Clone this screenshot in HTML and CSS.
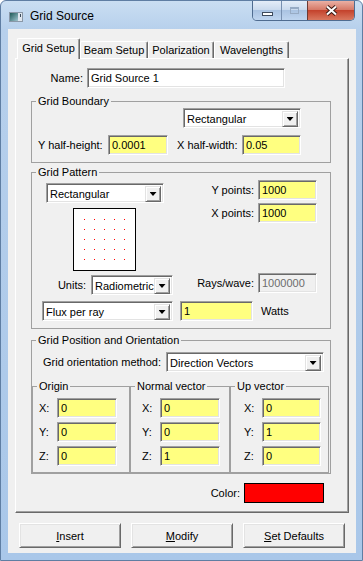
FILE: index.html
```html
<!DOCTYPE html>
<html lang="en">
<head>
<meta charset="UTF-8" />
<meta name="viewport" content="width=device-width, initial-scale=1" />
<title>Grid Source</title>
<link rel="stylesheet" href="styles.css">
</head>
<body>

<div class="window">
  <div class="titlebar">
    <svg class="app-icon" width="14" height="10" viewBox="0 0 14 10">
      <defs>
        <linearGradient id="iconFill" x1="0" y1="0" x2="1" y2="1">
          <stop offset="0" stop-color="#1f5a57" />
          <stop offset="1" stop-color="#9fc4cf" />
        </linearGradient>
      </defs>
      <rect x="0.5" y="0.5" width="13" height="9" fill="#dfe6ee" stroke="#8a98a8" />
      <rect x="1" y="1" width="8" height="8" fill="url(#iconFill)" />
      <rect x="11" y="2" width="1" height="3" fill="#3a4a5a" />
    </svg>
    <span class="title">Grid Source</span>
    <div class="caption-btns">
      <div class="cap cap-min"><span class="min-glyph"></span></div>
      <div class="cap cap-max"><span class="max-glyph"></span></div>
      <div class="cap cap-close">
        <svg width="13" height="11" viewBox="0 0 13 11">
          <path d="M2 1.5 L11 9.5 M11 1.5 L2 9.5" stroke="#3b1a14" stroke-width="4" />
          <path d="M2 1.5 L11 9.5 M11 1.5 L2 9.5" stroke="#fff" stroke-width="2" />
        </svg>
      </div>
    </div>
  </div>

  <div class="client">
    <div class="tabs">
      <div class="tab active">Grid Setup</div>
      <div class="tab">Beam Setup</div>
      <div class="tab">Polarization</div>
      <div class="tab">Wavelengths</div>
    </div>

    <div class="panel">
      <div class="name-row">
        <label class="name-label">Name:</label>
        <input class="field name-field" type="text" value="Grid Source 1" />
      </div>

      <!-- Grid Boundary -->
      <fieldset class="group boundary">
        <legend>Grid Boundary</legend>
        <div class="fs-body">
          <div class="combo boundary-shape">
            <span class="combo-text">Rectangular</span><span class="combo-btn"></span>
          </div>
          <div class="half-row">
            <label class="lbl-yhalf">Y half-height:</label>
            <input class="field yellow w60" type="text" value="0.0001" />
            <label class="lbl-xhalf">X half-width:</label>
            <input class="field yellow w59" type="text" value="0.05" />
          </div>
        </div>
      </fieldset>

      <!-- Grid Pattern -->
      <fieldset class="group pattern">
        <legend>Grid Pattern</legend>
        <div class="fs-body">
          <div class="pattern-top">
            <div class="pattern-left">
              <div class="combo pattern-shape">
                <span class="combo-text">Rectangular</span><span class="combo-btn"></span>
              </div>
              <svg class="preview" width="63" height="63" viewBox="0 0 63 63">
                <defs>
                  <pattern id="dots" x="11" y="11" width="10" height="10" patternUnits="userSpaceOnUse">
                    <rect width="1" height="1" fill="#ff0000" />
                  </pattern>
                </defs>
                <rect x="0.5" y="0.5" width="62" height="62" fill="#fff" stroke="#000" />
                <rect x="11" y="11" width="41" height="41" fill="url(#dots)" />
              </svg>
            </div>
            <div class="pattern-right">
              <div class="pair">
                <label class="lbl-points">Y points:</label>
                <input class="field yellow w59" type="text" value="1000" />
              </div>
              <div class="pair points-x">
                <label class="lbl-points">X points:</label>
                <input class="field yellow w59" type="text" value="1000" />
              </div>
            </div>
          </div>

          <div class="units-row">
            <div class="pair units-pair">
              <label class="lbl-units">Units:</label>
              <div class="combo units-combo">
                <span class="combo-text">Radiometric</span><span class="combo-btn"></span>
              </div>
            </div>
            <div class="pair">
              <label class="lbl-rays">Rays/wave:</label>
              <input class="field w59" type="text" value="1000000" disabled />
            </div>
          </div>

          <div class="flux-row">
            <div class="combo flux-combo">
              <span class="combo-text">Flux per ray</span><span class="combo-btn"></span>
            </div>
            <input class="field yellow flux-field" type="text" value="1" />
            <span class="watts">Watts</span>
          </div>
        </div>
      </fieldset>

      <!-- Grid Position and Orientation -->
      <fieldset class="group position">
        <legend>Grid Position and Orientation</legend>
        <div class="orient-row">
          <label class="lbl-orient">Grid orientation method:</label>
          <div class="combo orient-combo">
            <span class="combo-text">Direction Vectors</span><span class="combo-btn"></span>
          </div>
        </div>

        <div class="vectors">
          <fieldset class="group vec vec-origin">
            <legend>Origin</legend>
            <div class="vec-body">
              <div class="vec-row"><label>X:</label><input class="field yellow w60" type="text" value="0" /></div>
              <div class="vec-row"><label>Y:</label><input class="field yellow w60" type="text" value="0" /></div>
              <div class="vec-row"><label>Z:</label><input class="field yellow w60" type="text" value="0" /></div>
            </div>
          </fieldset>
          <fieldset class="group vec vec-normal">
            <legend>Normal vector</legend>
            <div class="vec-body">
              <div class="vec-row"><label>X:</label><input class="field yellow w60" type="text" value="0" /></div>
              <div class="vec-row"><label>Y:</label><input class="field yellow w60" type="text" value="0" /></div>
              <div class="vec-row"><label>Z:</label><input class="field yellow w60" type="text" value="1" /></div>
            </div>
          </fieldset>
          <fieldset class="group vec vec-up">
            <legend>Up vector</legend>
            <div class="vec-body">
              <div class="vec-row"><label>X:</label><input class="field yellow w59" type="text" value="0" /></div>
              <div class="vec-row"><label>Y:</label><input class="field yellow w59" type="text" value="1" /></div>
              <div class="vec-row"><label>Z:</label><input class="field yellow w59" type="text" value="0" /></div>
            </div>
          </fieldset>
        </div>
      </fieldset>

      <div class="color-row">
        <label class="lbl-color">Color:</label>
        <div class="swatch"></div>
      </div>
    </div>

    <div class="buttons">
      <button class="btn"><u>I</u>nsert</button>
      <button class="btn"><u>M</u>odify</button>
      <button class="btn"><u>S</u>et Defaults</button>
    </div>
  </div>
</div>

</body>
</html>
```

FILE: styles.css
```css
body {
  margin: 0;
  font-family: "Liberation Sans", Arial, sans-serif;
  font-size: 11px;
  color: #000;
  background: #fff;
}

/* Window frame */
.window {
  width: 363px;
  height: 561px;
  box-sizing: border-box;
  border: 1px solid #5f7ea3;
  border-radius: 6px 6px 0 0;
  background: linear-gradient(#cadef2, #b7d0ec 28px, #a9c7e9);
  display: flex;
  flex-direction: column;
}

.titlebar {
  height: 28px;
  display: flex;
  align-items: flex-start;
  padding-left: 8px;
}

.app-icon {
  margin-top: 11px;
}

.title {
  margin: 8px 0 0 7px;
  font-size: 12px;
  line-height: 14px;
}

/* Min / max / close */
.caption-btns {
  margin-left: auto;
  margin-right: 7px;
  height: 19px;
  display: flex;
  border: 1px solid #4f6c90;
  border-top: none;
  border-radius: 0 0 5px 5px;
  overflow: hidden;
}

.cap {
  height: 19px;
  display: flex;
  justify-content: center;
  align-items: center;
  background: linear-gradient(#e4edf8, #cbdbee 45%, #aac3e2 50%, #bfd5ef);
}

.cap-min {
  width: 28px;
  align-items: flex-end;
}

.cap-max {
  width: 25px;
  border-left: 1px solid #7890b0;
}

.cap-close {
  width: 46px;
  border-left: 1px solid #6d3a33;
  background: linear-gradient(#eab0a4, #d67a68 45%, #c4432d 50%, #d9785f);
}

.min-glyph {
  width: 9px;
  height: 2px;
  margin-bottom: 5px;
  background: #fff;
  box-shadow: 0 0 0 1px #3d4a5c;
}

.max-glyph {
  width: 7px;
  height: 5px;
  border: 1px solid #97abc4;
  box-shadow: inset 0 1px #97abc4;
}

/* Client area */
.client {
  margin-left: 7px;
  width: 348px;
  height: 524px;
  background: #f0f0f0;
  display: flex;
  flex-direction: column;
}

/* Tabs */
.tabs {
  display: flex;
  align-items: flex-end;
  height: 21px;
  margin: 9px 0 -1px 9px;
  position: relative;
  z-index: 1;
}

.tab {
  box-sizing: border-box;
  height: 17px;
  margin-bottom: 1px;
  display: flex;
  justify-content: center;
  align-items: center;
  background: #f0f0f0;
  border: 1px solid;
  border-color: #fff #696969 transparent #fff;
  border-bottom: none;
  border-radius: 2px 2px 0 0;
  box-shadow: inset -1px 0 #a0a0a0;
}

.tab.active {
  height: 21px;
  margin-bottom: 0;
  padding-bottom: 2px;
}

.tab:nth-child(1) { width: 63px; }
.tab:nth-child(2) { width: 68px; }
.tab:nth-child(3) { width: 66px; }
.tab:nth-child(4) { width: 75px; }

.panel {
  width: 334px;
  height: 455px;
  box-sizing: border-box;
  margin-left: 7px;
  padding: 9px 0 0 15px;
  border: 1px solid;
  border-color: #fff #696969 #696969 #fff;
  box-shadow: inset -1px -1px #a0a0a0;
}

/* Edit fields */
.field {
  box-sizing: border-box;
  height: 20px;
  margin: 0;
  padding: 0 3px;
  font: inherit;
  color: #000;
  background: #fff;
  border: 1px solid;
  border-color: #a0a0a0 #fff #fff #a0a0a0;
  box-shadow: inset 1px 1px #696969, inset -1px -1px #e3e3e3;
  outline: none;
}

.field.yellow {
  background: #ffff80;
}

.field:disabled {
  background: #f0f0f0;
  color: #6d6d6d;
}

.w59 { width: 59px; }
.w60 { width: 60px; }

/* Combo boxes */
.combo {
  box-sizing: border-box;
  height: 20px;
  display: flex;
  padding: 2px;
  background: #fff;
  border: 1px solid;
  border-color: #a0a0a0 #fff #fff #a0a0a0;
  box-shadow: inset 1px 1px #696969, inset -1px -1px #e3e3e3;
}

.combo-text {
  flex: 1;
  padding-left: 1px;
  line-height: 16px;
  white-space: nowrap;
  overflow: hidden;
}

.combo-btn {
  box-sizing: border-box;
  width: 16px;
  height: 16px;
  display: flex;
  justify-content: center;
  align-items: center;
  background: #f0f0f0;
  border: 1px solid;
  border-color: #e3e3e3 #696969 #696969 #e3e3e3;
  box-shadow: inset 1px 1px #fff, inset -1px -1px #a0a0a0;
}

.combo-btn::after {
  content: "";
  width: 7px;
  height: 4px;
  background: #000;
  clip-path: polygon(0 0, 100% 0, 50% 100%);
}

/* Name */
.name-row {
  display: flex;
  align-items: center;
}

.name-label {
  width: 52px;
  margin-right: 4px;
  text-align: right;
}

.name-field {
  width: 198px;
}

/* Group boxes */
.group {
  box-sizing: border-box;
  width: 300px;
  min-width: 0;
  margin: 0;
  padding: 0;
  border: 1px solid #a0a0a0;
}

.group legend {
  margin-left: 4px;
  padding: 0 2px;
  line-height: 13px;
}

.fs-body {
  padding: 0 0 7px 6px;
}

.boundary {
  margin-top: 7px;
}

.boundary-shape {
  width: 118px;
  margin-left: 145px;
}

.half-row {
  display: flex;
  align-items: center;
  margin-top: 7px;
}

.lbl-yhalf {
  width: 70px;
}

.lbl-xhalf {
  width: 65px;
  margin-left: 9px;
}

/* Grid pattern */
.pattern {
  margin-top: 3px;
}

.pattern-top {
  display: flex;
  padding-top: 1px;
}

.pattern-left {
  width: 140px;
  display: flex;
  flex-direction: column;
}

.pattern-shape {
  width: 118px;
  margin: 3px 0 0 8px;
}

.preview {
  display: block;
  margin: 5px 0 0 35px;
}

.pair {
  display: flex;
  align-items: center;
}

.points-x {
  margin-top: 3px;
}

.lbl-points {
  width: 76px;
  margin-right: 4px;
  text-align: right;
}

.units-row {
  display: flex;
  align-items: flex-start;
  margin-top: 2px;
}

.units-pair {
  margin-top: 2px;
}

.lbl-units {
  width: 48px;
  margin-right: 5px;
  text-align: right;
}

.units-combo {
  width: 82px;
}

.lbl-rays {
  width: 81px;
  margin-right: 4px;
  text-align: right;
}

.flux-row {
  display: flex;
  align-items: center;
  margin-top: 6px;
}

.flux-combo {
  width: 131px;
  margin-left: 4px;
}

.flux-field {
  width: 73px;
  margin-left: 7px;
}

.watts {
  margin-left: 8px;
}

/* Position and orientation */
.position {
  margin-top: 5px;
}

.orient-row {
  display: flex;
  align-items: center;
  margin: 5px 0 0 11px;
}

.lbl-orient {
  width: 123px;
}

.orient-combo {
  width: 158px;
}

.vectors {
  display: flex;
  margin-top: 8px;
}

.vec-origin { width: 98px; }
.vec-normal { width: 100px; }
.vec-up { width: 99px; }

.vec-body {
  display: flex;
  flex-direction: column;
  gap: 4px;
  padding: 5px 0 6px 6px;
}

.vec-normal .vec-body { padding-left: 11px; }
.vec-up .vec-body { padding-left: 13px; }

.vec-row {
  display: flex;
  align-items: center;
}

.vec-row label {
  width: 18px;
}

.color-row {
  width: 300px;
  box-sizing: border-box;
  display: flex;
  justify-content: flex-end;
  align-items: center;
  margin-top: 9px;
  padding-right: 7px;
}

.lbl-color {
  margin-right: 4px;
}

.swatch {
  width: 80px;
  height: 20px;
  box-sizing: border-box;
  border: 1px solid #000;
  background: #ff0000;
}

/* Bottom buttons */
.buttons {
  display: flex;
  gap: 10px;
  margin: 10px 0 0 11px;
}

.btn {
  width: 102px;
  height: 25px;
  padding: 0;
  font: inherit;
  color: #000;
  background: #f0f0f0;
  border: 1px solid;
  border-color: #fff #696969 #696969 #fff;
  box-shadow: inset 1px 1px #e3e3e3, inset -1px -1px #a0a0a0;
}
```
